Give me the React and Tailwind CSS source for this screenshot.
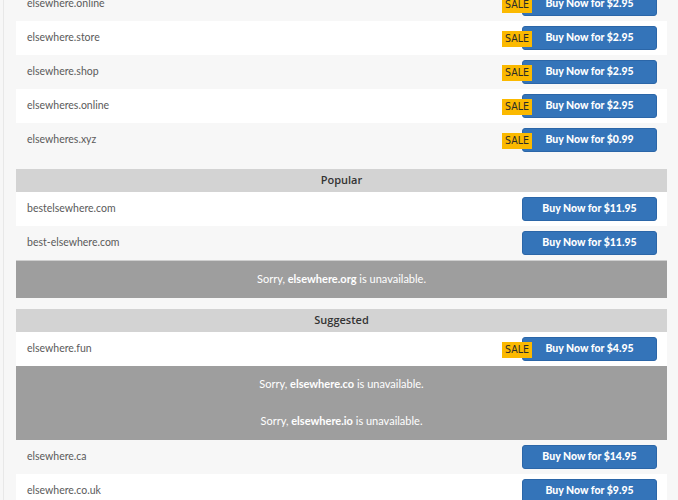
import React from "react";

const topRows = [
  { name: "elsewhere.online", price: "$2.95", sale: true },
  { name: "elsewhere.store", price: "$2.95", sale: true },
  { name: "elsewhere.shop", price: "$2.95", sale: true },
  { name: "elsewheres.online", price: "$2.95", sale: true },
  { name: "elsewheres.xyz", price: "$0.99", sale: true },
];

const popularRows = [
  { name: "bestelsewhere.com", price: "$11.95" },
  { name: "best-elsewhere.com", price: "$11.95" },
];

const BuyButton = ({ price, sale }) => (
  <div className="flex items-center">
    {sale && (
      <span className="relative z-10 -mr-[10px] mt-[1px] flex h-[16px] items-center bg-[#fbb900] px-[3px] text-[10.5px] leading-none text-[#2a2a2a] [font-family:'DejaVu_Sans_Condensed','Liberation_Sans_Narrow','Roboto',sans-serif]">
        SALE
      </span>
    )}
    <button className="h-[24px] w-[135px] rounded-[3px] border border-[#2b66a8] bg-[#3474b9] text-[10.5px] font-black text-white">
      Buy Now for {price}
    </button>
  </div>
);

const DomainRow = ({ name, price, sale, white }) => (
  <div
    className={`flex h-[34px] items-center justify-between pl-[11px] pr-[10px] ${
      white ? "bg-white" : "bg-[#f7f7f7]"
    }`}
  >
    <span className="text-[10.5px] text-[#5a5a5a]">{name}</span>
    <BuyButton price={price} sale={sale} />
  </div>
);

const Header = ({ children }) => (
  <div className="flex h-[23px] items-center justify-center bg-[#d3d3d3] text-[11px] font-semibold text-[#333] [font-family:'Open_Sans',sans-serif]">
    {children}
  </div>
);

const Unavailable = ({ domain }) => (
  <div className="flex h-[37px] items-center justify-center text-[11px] text-white">
    <span>
      Sorry, <b>{domain}</b> is unavailable.
    </span>
  </div>
);

export default function App() {
  return (
    <div className="h-[500px] overflow-hidden bg-[#f7f7f7] [font-family:'Lato',sans-serif]">
      <div className="flex h-full">
        <div className="ml-[3px] w-[1px] bg-[#e8e8e8]" />
        <div className="-mt-[13px] ml-[12px] w-[651px]">
          {topRows.map((r, i) => (
            <DomainRow key={r.name} {...r} white={i % 2 === 1} />
          ))}

          <div className="mt-[12px]">
            <Header>Popular</Header>
            {popularRows.map((r, i) => (
              <DomainRow key={r.name} {...r} white={i % 2 === 0} />
            ))}
            <div className="border-t border-[#cfcfcf] bg-[#9e9e9e]">
              <Unavailable domain="elsewhere.org" />
            </div>
          </div>

          <div className="mt-[11px]">
            <Header>Suggested</Header>
            <DomainRow name="elsewhere.fun" price="$4.95" sale white />
            <div className="bg-[#9e9e9e]">
              <Unavailable domain="elsewhere.co" />
              <Unavailable domain="elsewhere.io" />
            </div>
            <DomainRow name="elsewhere.ca" price="$14.95" />
            <DomainRow name="elsewhere.co.uk" price="$9.95" white />
          </div>
        </div>
      </div>
    </div>
  );
}
